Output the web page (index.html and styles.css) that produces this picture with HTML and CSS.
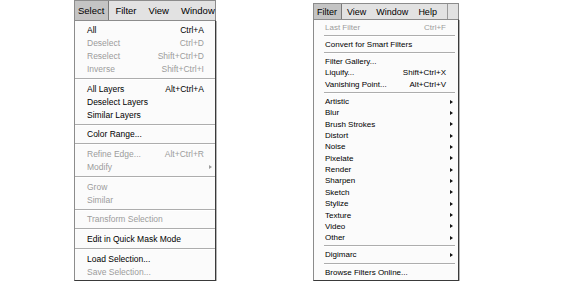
FILE: index.html
```html
<!DOCTYPE html>
<html lang="en">
<head>
    <meta charset="UTF-8">
    <meta name="viewport" content="width=device-width, initial-scale=1.0">
    <title>Select and Filter menus</title>
    <link rel="stylesheet" href="styles.css">
</head>
<body>
    <div class="page">
        <div class="menu menu-select">
            <div class="menubar">
                <span class="mb-item active">Select</span>
                <span class="mb-item">Filter</span>
                <span class="mb-item">View</span>
                <span class="mb-item">Window</span>
            </div>
            <ul class="dropdown">
                <li class="item"><span>All</span><span class="key">Ctrl+A</span></li>
                <li class="item disabled"><span>Deselect</span><span class="key">Ctrl+D</span></li>
                <li class="item disabled"><span>Reselect</span><span class="key">Shift+Ctrl+D</span></li>
                <li class="item disabled"><span>Inverse</span><span class="key">Shift+Ctrl+I</span></li>
                <li class="sep"></li>
                <li class="item"><span>All Layers</span><span class="key">Alt+Ctrl+A</span></li>
                <li class="item"><span>Deselect Layers</span></li>
                <li class="item"><span>Similar Layers</span></li>
                <li class="sep"></li>
                <li class="item"><span>Color Range...</span></li>
                <li class="sep"></li>
                <li class="item disabled"><span>Refine Edge...</span><span class="key">Alt+Ctrl+R</span></li>
                <li class="item disabled sub"><span>Modify</span><span class="arrow"></span></li>
                <li class="sep"></li>
                <li class="item disabled"><span>Grow</span></li>
                <li class="item disabled"><span>Similar</span></li>
                <li class="sep"></li>
                <li class="item disabled"><span>Transform Selection</span></li>
                <li class="sep"></li>
                <li class="item"><span>Edit in Quick Mask Mode</span></li>
                <li class="sep"></li>
                <li class="item"><span>Load Selection...</span></li>
                <li class="item disabled"><span>Save Selection...</span></li>
            </ul>
        </div>

        <div class="menu menu-filter">
            <div class="menubar">
                <span class="mb-item active">Filter</span>
                <span class="mb-item">View</span>
                <span class="mb-item">Window</span>
                <span class="mb-item last">Help</span>
                <span class="mb-fill"></span>
            </div>
            <ul class="dropdown">
                <li class="item disabled"><span>Last Filter</span><span class="key">Ctrl+F</span></li>
                <li class="sep"></li>
                <li class="item"><span>Convert for Smart Filters</span></li>
                <li class="sep"></li>
                <li class="item"><span>Filter Gallery...</span></li>
                <li class="item"><span>Liquify...</span><span class="key">Shift+Ctrl+X</span></li>
                <li class="item"><span>Vanishing Point...</span><span class="key">Alt+Ctrl+V</span></li>
                <li class="sep"></li>
                <li class="item sub"><span>Artistic</span><span class="arrow"></span></li>
                <li class="item sub"><span>Blur</span><span class="arrow"></span></li>
                <li class="item sub"><span>Brush Strokes</span><span class="arrow"></span></li>
                <li class="item sub"><span>Distort</span><span class="arrow"></span></li>
                <li class="item sub"><span>Noise</span><span class="arrow"></span></li>
                <li class="item sub"><span>Pixelate</span><span class="arrow"></span></li>
                <li class="item sub"><span>Render</span><span class="arrow"></span></li>
                <li class="item sub"><span>Sharpen</span><span class="arrow"></span></li>
                <li class="item sub"><span>Sketch</span><span class="arrow"></span></li>
                <li class="item sub"><span>Stylize</span><span class="arrow"></span></li>
                <li class="item sub"><span>Texture</span><span class="arrow"></span></li>
                <li class="item sub"><span>Video</span><span class="arrow"></span></li>
                <li class="item sub"><span>Other</span><span class="arrow"></span></li>
                <li class="sep"></li>
                <li class="item sub"><span>Digimarc</span><span class="arrow"></span></li>
                <li class="sep"></li>
                <li class="item"><span>Browse Filters Online...</span></li>
            </ul>
        </div>
    </div>
</body>
</html>
```

FILE: styles.css
```css
body {
    margin: 0;
    background-color: #ffffff;
    font-family: 'Liberation Sans', Arial, sans-serif;
    color: #000;
}
.page {
    display: flex;
    align-items: flex-start;
    padding-left: 74px;
    gap: 97px;
}
.menu {
    display: flex;
    flex-direction: column;
}
.menu-select {
    width: 142px;
}
.menu-filter {
    width: 146px;
    margin-top: 3px;
}
.menubar {
    display: flex;
    align-items: stretch;
    background-color: #e2e2e2;
    border: 1px solid #8c8c8c;
    border-bottom: none;
    box-sizing: border-box;
}
.menu-select .menubar {
    height: 20px;
    font-size: 9.5px;
}
.menu-filter .menubar {
    height: 16px;
    font-size: 9px;
}
.mb-item {
    display: flex;
    align-items: center;
    padding: 0 6px;
    color: #000;
}
.mb-item.active {
    background-color: #c4c4c4;
    border-right: 1px solid #7a7a7a;
    padding: 0 4px 0 3px;
}
.menu-filter .mb-item {
    padding: 0 5px;
}
.menu-filter .mb-item.active {
    padding: 0 4px 0 3px;
}
.menu-filter .mb-item.last {
    padding-right: 10px;
    border-right: 1px solid #9a9a9a;
}
.mb-fill {
    flex: 1;
}
.dropdown {
    list-style: none;
    margin: 0;
    background-color: #fbfbfb;
    border: 1px solid #8c8c8c;
    border-right-color: #3a3a3a;
    border-bottom-color: #3a3a3a;
    box-shadow: 1px 1px 0 #b5b5b5;
}
.menu-select .dropdown {
    padding: 2.5px 0 2px;
    font-size: 8.5px;
}
.menu-filter .dropdown {
    padding: 1.5px 0 2px;
    font-size: 8px;
}
.item {
    display: flex;
    justify-content: space-between;
    align-items: center;
}
.menu-select .item {
    height: 13px;
    padding: 0 11px 0 12px;
}
.menu-select .item.sub {
    padding-right: 3px;
}
.menu-filter .item {
    height: 11.35px;
    padding: 0 5px 0 11px;
}
.menu-filter .key {
    margin-right: 7px;
}
.item.disabled {
    color: #9c9c9c;
}
.key {
    white-space: nowrap;
}
.arrow {
    width: 0;
    height: 0;
    border-top: 2.5px solid transparent;
    border-bottom: 2.5px solid transparent;
    border-left: 3px solid #111;
}
.item.disabled .arrow {
    border-left-color: #9c9c9c;
}
.sep {
    height: 1px;
    background-color: #adadad;
    border-bottom: 1px solid #ffffff;
}
.menu-select .sep {
    margin: 2.5px 0 2.2px;
}
.menu-filter .sep {
    margin: 2px 3px 1.9px 10px;
}
```
